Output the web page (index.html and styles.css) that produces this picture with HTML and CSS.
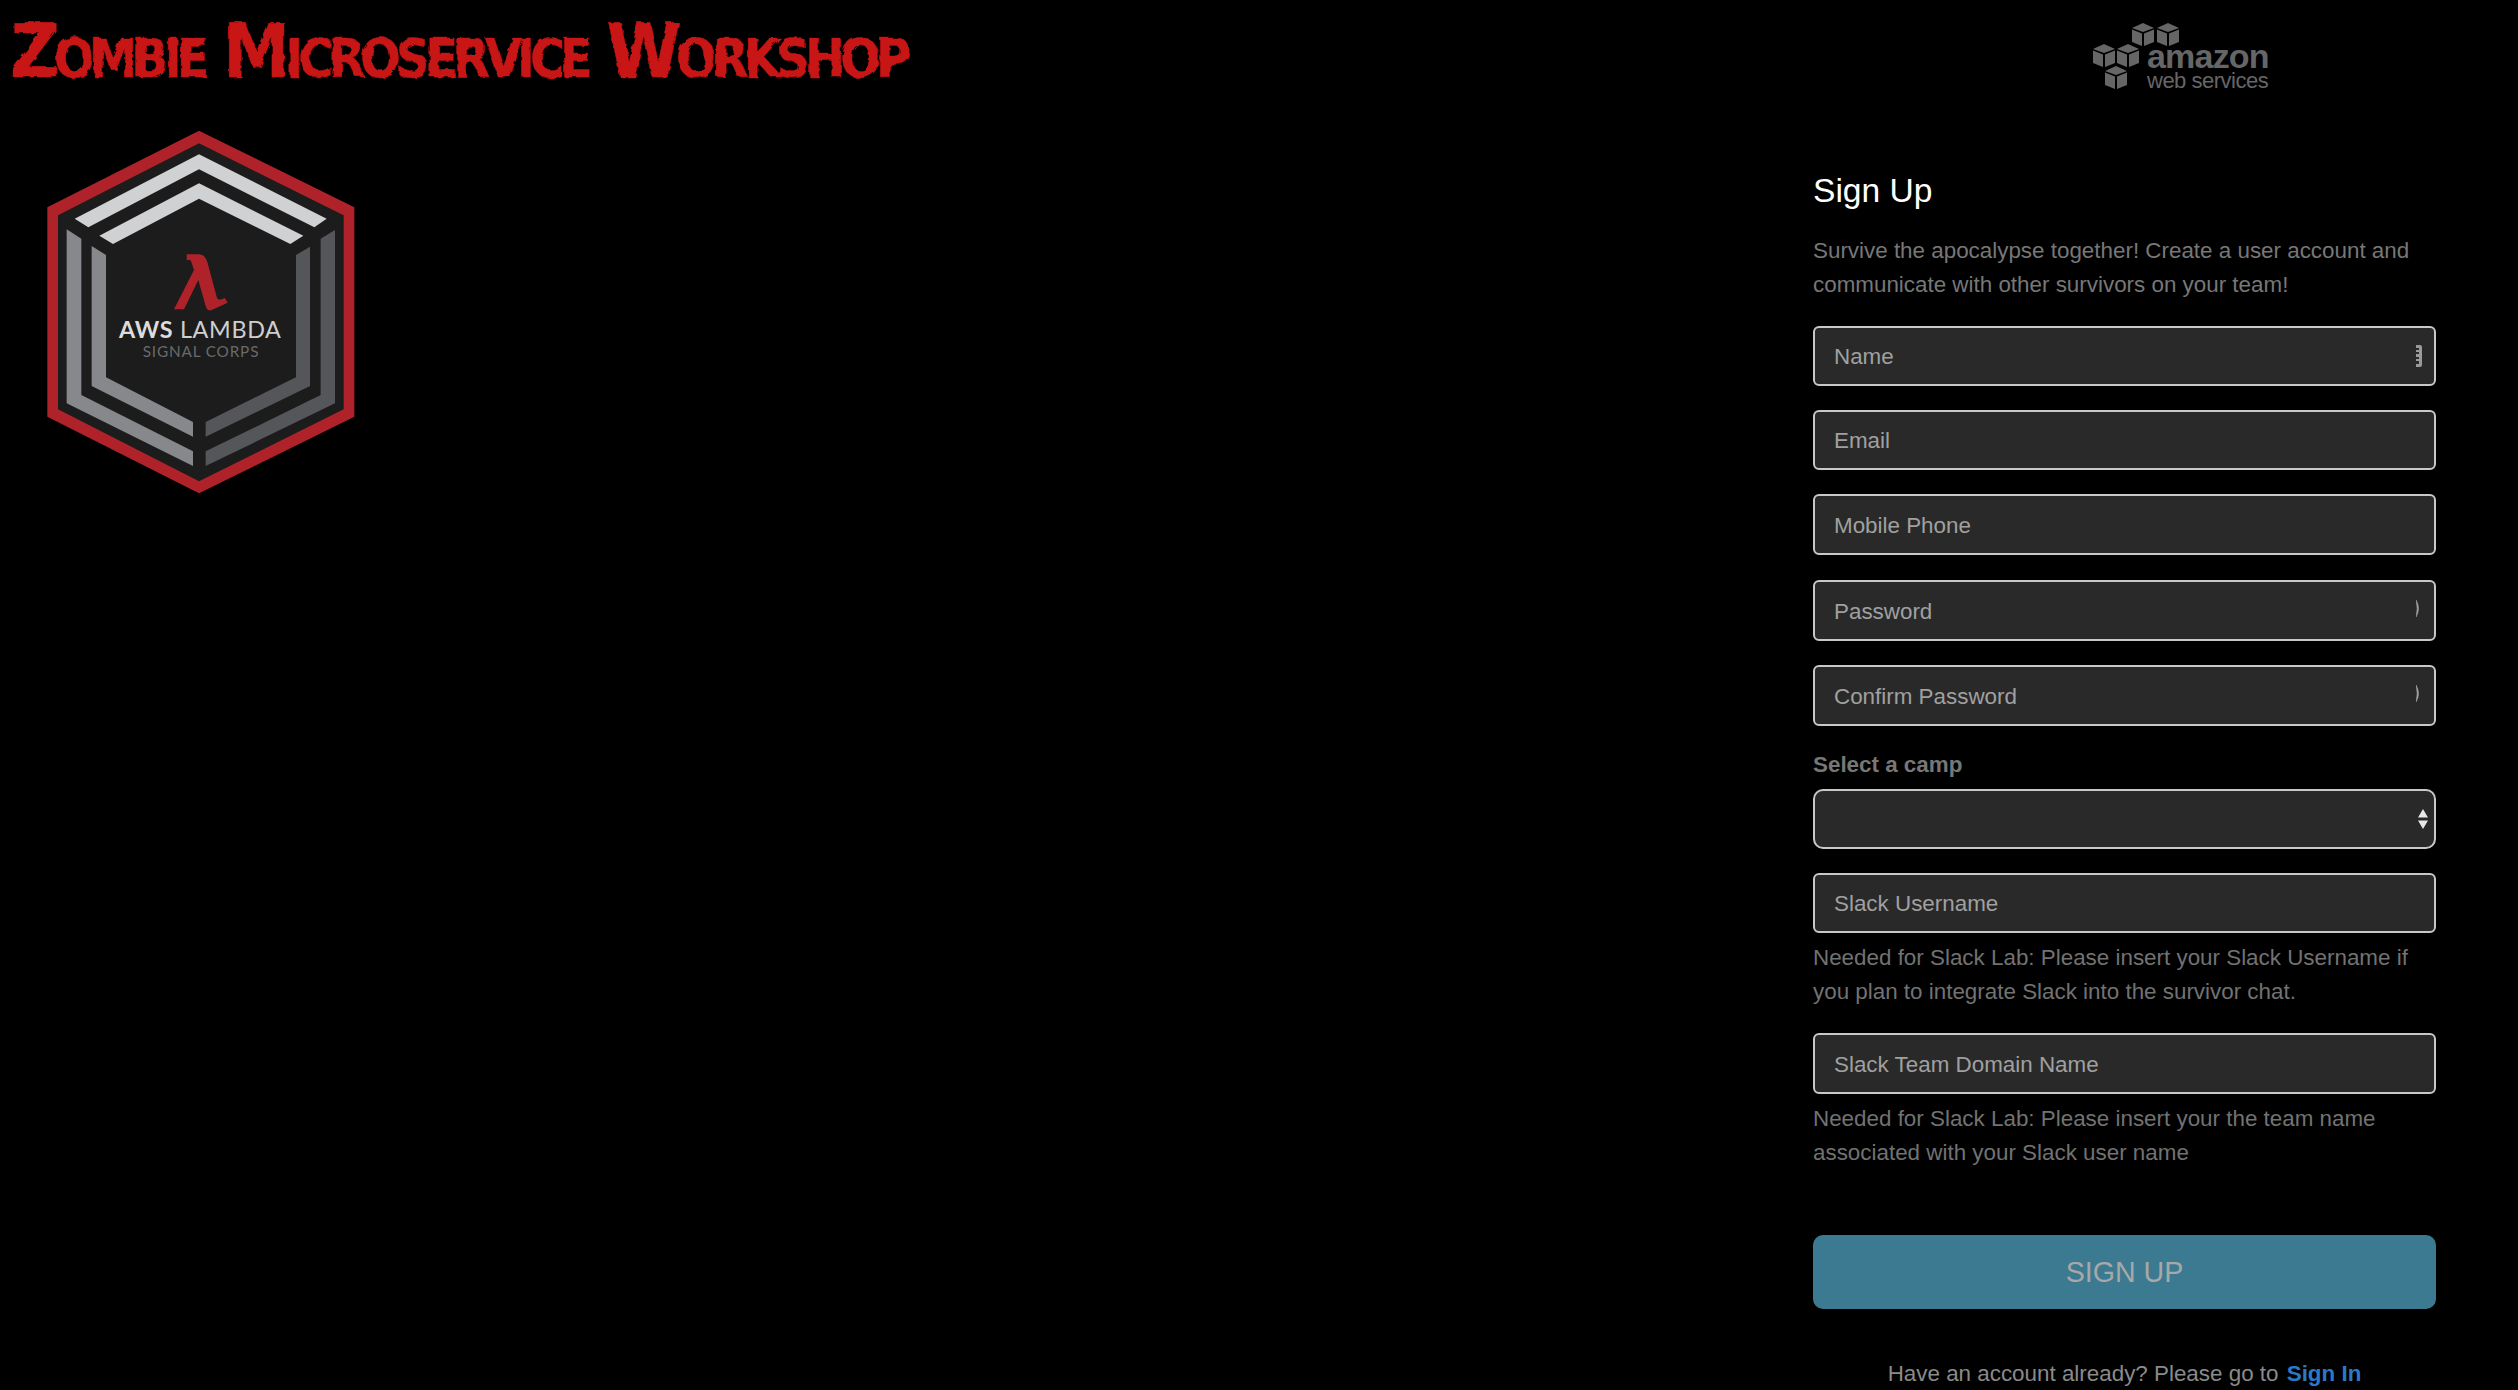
FILE: index.html
```html
<!DOCTYPE html>
<html lang="en">
<head>
<meta charset="utf-8">
<title>Zombie Microservice Workshop</title>
<link rel="stylesheet" href="styles.css">
</head>
<body>
<svg class="defs" width="0" height="0" aria-hidden="true">
  <filter id="rough" x="-2%" y="-10%" width="104%" height="120%">
    <feTurbulence type="fractalNoise" baseFrequency="0.09" numOctaves="2" seed="4" result="n"/>
    <feDisplacementMap in="SourceGraphic" in2="n" scale="5"/>
    <feGaussianBlur stdDeviation="0.6"/>
  </filter>
  <filter id="soft"><feGaussianBlur stdDeviation="0.5"/></filter>
</svg>
<div class="page">
  <div class="left">
    <h1 class="title">Zombie Microservice Workshop</h1>
    <svg class="badge" viewBox="0 0 1050 1140" role="img" aria-label="AWS Lambda Signal Corps">
      <g filter="url(#soft)">
        <polygon points="507,32 973,262 973,890 507,1120 52,890 52,262" fill="#b0232a"/>
        <polygon points="507,70 941,286 941,868 507,1084 84,868 84,286" fill="#1d1d1d"/>
        <polygon points="507,103 890,296 853,322 507,148 175,322 134,296" fill="#d0d1d3"/>
        <polygon points="507,190 820,347 781,372 507,236 249,372 208,347" fill="#d0d1d3"/>
        <polygon points="110,328 154,356 154,825 489,994 489,1038 110,850" fill="#87888b"/>
        <polygon points="185,378 228,405 228,772 489,906 489,950 185,798" fill="#87888b"/>
        <polygon points="915,330 872,356 872,825 527,994 527,1038 915,850" fill="#55565a"/>
        <polygon points="840,380 798,405 798,772 527,906 527,950 840,798" fill="#55565a"/>
        <path d="M470 403H505C520 403 526 411 532 426L560 530C563 541 570 541 584 534L593 548L545 570C535 574 530 568 527 558L505 480L462 568H432L492 450L485 428C481 417 476 419 470 421Z" fill="#b0232a"/>
      </g>
      <text class="badge-main" x="511" y="655" text-anchor="middle"><tspan class="badge-bold">AWS</tspan> LAMBDA</text>
      <text class="badge-sub" x="513" y="711" text-anchor="middle">SIGNAL CORPS</text>
    </svg>
  </div>
  <div class="right">
    <div class="aws">
      <svg class="aws-cubes" viewBox="0 0 220 90" aria-hidden="true">
        <g fill="#666" filter="url(#soft)">
          <g id="cube">
            <path d="M62 18L73 13L84 18L73 22Z"/><path d="M62 19.5L72 23.5V36L62 32Z"/><path d="M74 23.5L84 19.5V32L74 36Z"/>
          </g>
          <use href="#cube" x="25"/>
          <use href="#cube" x="-39" y="21"/>
          <use href="#cube" x="-15" y="21"/>
          <use href="#cube" x="-27" y="43"/>
        </g>
      </svg>
      <div class="aws-text"><span class="aws-amazon">amazon</span><span class="aws-web">web services</span></div>
    </div>
    <form class="form">
      <h2 class="form-title">Sign Up</h2>
      <p class="intro">Survive the apocalypse together! Create a user account and communicate with other survivors on your team!</p>
      <div class="field"><input class="input" type="text" placeholder="Name">
        <svg class="key key-name" viewBox="0 0 6 22" aria-hidden="true"><path d="M0 0H4Q6 0 6 2V20Q6 22 4 22H0V19H3V16H0V14H3V12H0V9H3V7H0V5H3V3H0Z" fill="#9a9a9a"/></svg>
      </div>
      <div class="field"><input class="input" type="text" placeholder="Email"></div>
      <div class="field tall"><input class="input" type="text" placeholder="Mobile Phone"></div>
      <div class="field tall loose"><input class="input" type="password" placeholder="Password">
        <svg class="key key-pass" viewBox="0 0 4 17" aria-hidden="true"><path d="M0 0Q5 8.5 0 17Q2.400 8.500 0 0Z" fill="#a8a8a8" stroke="#a8a8a8" stroke-width="0.6"/></svg>
      </div>
      <div class="field tall"><input class="input" type="password" placeholder="Confirm Password">
        <svg class="key key-pass" viewBox="0 0 4 17" aria-hidden="true"><path d="M0 0Q5 8.5 0 17Q2.400 8.500 0 0Z" fill="#a8a8a8" stroke="#a8a8a8" stroke-width="0.6"/></svg>
      </div>
      <label class="camp-label" for="camp">Select a camp</label>
      <div class="field"><select class="input select" id="camp"><option></option></select>
        <svg class="arrows" viewBox="0 0 10 20" aria-hidden="true"><path d="M5 0L10 8.500H0ZM0 11.500H10L5 20Z" fill="#e8e8e8"/></svg>
      </div>
      <div class="field"><input class="input" type="text" placeholder="Slack Username"></div>
      <p class="help">Needed for Slack Lab: Please insert your Slack Username if you plan to integrate Slack into the survivor chat.</p>
      <div class="field tall"><input class="input" type="text" placeholder="Slack Team Domain Name"></div>
      <p class="help">Needed for Slack Lab: Please insert your the team name associated with your Slack user name</p>
      <button class="submit" type="button">SIGN UP</button>
      <p class="switch">Have an account already? Please go to <a class="switch-link" href="#">Sign In</a></p>
    </form>
  </div>
</div>
</body>
</html>
```
FILE: styles.css
```css
* { box-sizing: border-box; }
html, body { margin: 0; height: 100%; overflow: hidden; background: #000; }
body { font-family: "Liberation Sans", Arial, sans-serif; color: #777; }
.defs { position: absolute; }
.page { display: flex; justify-content: space-between; height: 1390px; padding-right: 82px; }
.left { padding: 18px 0 0 10px; }
.title {
  margin: 0;
  font-family: "DejaVu Sans Condensed", "DejaVu Sans", sans-serif;
  font-size: 75px;
  line-height: 66px;
  font-weight: 700;
  font-variant: small-caps;
  letter-spacing: -4.850px;
  white-space: nowrap;
  color: #c81414;
  -webkit-text-stroke: 0.500px #c81414;
  filter: url(#rough);
}
.badge { display: block; width: 350px; height: 380px; margin: 36px 0 0 20px; }
.badge-main { font-family: "Lato", "Liberation Sans", sans-serif; font-size: 70px; fill: #cfcfcf; letter-spacing: 2px; }
.badge-bold { font-weight: 700; fill: #dcdcdc; }
.badge-sub { font-family: "Lato", "Liberation Sans", sans-serif; font-size: 46px; fill: #6a6a6a; letter-spacing: 2.500px; }
.right { width: 623px; }
.aws { display: flex; height: 100px; margin-left: 257px; position: relative; }
.aws-cubes { width: 220px; height: 90px; margin-top: 10px; flex: none; }
.aws-text {
  position: absolute; left: 77px; top: 41px;
  display: flex; flex-direction: column; align-items: flex-start;
  color: #666; font-family: "Liberation Sans", sans-serif;
}
.aws-amazon { font-size: 34px; line-height: 30px; font-weight: 700; letter-spacing: -0.800px; }
.aws-web { font-size: 22px; line-height: 20px; letter-spacing: -0.500px; white-space: nowrap; }
.form { display: flex; flex-direction: column; }
.form-title { margin: 70px 0 0; font-size: 33.6px; line-height: 42px; font-weight: 400; color: #fff; }
.intro { margin: 22px 0 0; font-size: 22.4px; line-height: 34px; color: #777; }
.field { position: relative; height: 60px; margin-top: 24px; }
.form .intro + .field { margin-top: 24px; }
.field.tall { height: 61px; }
.field.loose { margin-top: 25px; }
.input {
  display: block; width: 100%; height: 100%;
  padding: 2px 19px 0;
  background: #292929;
  border: 2px solid #c8c8c8;
  border-radius: 6px;
  color: #ccc;
  font: 22.4px "Liberation Sans", Arial, sans-serif;
  outline: 0;
}
.input::placeholder { color: #a0a0a0; opacity: 1; }
.select { appearance: none; -webkit-appearance: none; border-radius: 10px; }
.key, .arrows { position: absolute; }
.key-name { width: 6px; height: 22px; right: 14px; top: 19px; }
.key-pass { width: 4px; height: 17px; right: 16px; top: 20px; }
.arrows { width: 10px; height: 20px; right: 8px; top: 20px; }
.camp-label { display: block; margin-top: 25px; font-size: 22.4px; line-height: 28px; font-weight: 700; color: #777; }
.camp-label + .field { margin-top: 10px; }
.help { margin: 8px 0 0; font-size: 22.4px; line-height: 34px; color: #727272; }
.submit {
  margin-top: 65px; height: 74px; border: 0; border-radius: 10px;
  background: #3b7a90; color: #a8a8a8;
  font: 28.6px "Liberation Sans", Arial, sans-serif;
}
.switch { margin: 48px 0 0; text-align: center; font-size: 22.4px; line-height: 34px; color: #8a8a8a; }
.switch-link { color: #2a79c9; font-weight: 700; text-decoration: none; margin-left: 2px; }
```
